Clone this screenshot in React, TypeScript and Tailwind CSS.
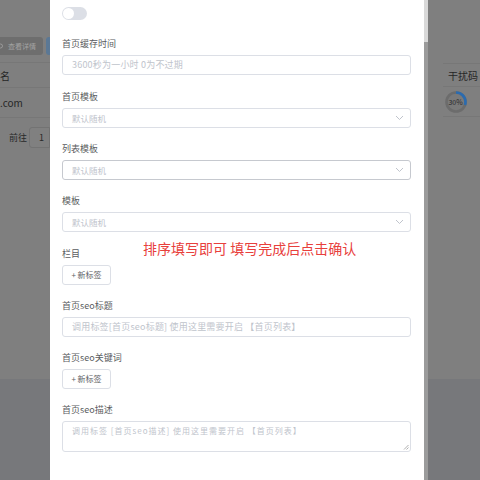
import React from "react";

const font = { fontFamily: '"Noto Sans CJK SC", "Noto Sans", sans-serif' };

function Label({ children }: { children: React.ReactNode }) {
  return <div className="h-[14px] text-[9px] leading-[14px] text-[#5a5c60]">{children}</div>;
}

function Input({ placeholder }: { placeholder: string }) {
  return (
    <div className="mt-[4px] flex h-[20px] items-center rounded-[3px] border border-[#dcdfe6] bg-white px-[9px] text-[9px] tracking-[0.2px] text-[#c0c4cc]">
      {placeholder}
    </div>
  );
}

function Select({ dark }: { dark?: boolean }) {
  return (
    <div
      className={
        "mt-[4px] flex h-[20px] items-center justify-between rounded-[3px] border bg-white pl-[9px] pr-[6px] text-[8.5px] text-[#c0c4cc] " +
        (dark ? "border-[#c6c9cf]" : "border-[#dcdfe6]")
      }
    >
      <span>默认随机</span>
      <svg width="9" height="6" viewBox="0 0 9 6" fill="none">
        <path d="M1 1l3.5 3.5L8 1" stroke="#c0c4cc" strokeWidth="1" />
      </svg>
    </div>
  );
}

function TagButton() {
  return (
    <div className="mt-[4px] flex h-[20px] w-[49px] items-center justify-center rounded-[3px] border border-[#dcdfe6] bg-white text-[8px] text-[#606266]">
      + 新标签
    </div>
  );
}

function Item({ label, children, mb }: { label: string; children: React.ReactNode; mb: string }) {
  return (
    <div className={mb}>
      <Label>{label}</Label>
      {children}
    </div>
  );
}

export default function App() {
  return (
    <div className="relative flex h-[480px] w-[480px] overflow-hidden" style={font}>
      {/* left page behind overlay */}
      <div className="flex w-[50px] shrink-0 flex-col">
        <div className="flex h-[379px] flex-col bg-[#7f7f7f]">
          <div className="h-[37px]" />
          <div className="flex h-[18px]">
            <div className="flex w-[43px] items-center gap-[2px] overflow-hidden rounded-r-[3px] bg-[#6e6e6e] text-[7px] text-[#a3a3a3]">
              <svg className="-ml-[1px] shrink-0" width="6" height="6" viewBox="0 0 6 6">
                <circle cx="1.5" cy="3" r="2" fill="none" stroke="#a3a3a3" strokeWidth="0.8" />
              </svg>
              <span className="ml-[1px]">查看详情</span>
            </div>
            <div className="ml-[3px] flex-1 rounded-l-[3px] bg-[#5b7895]" />
          </div>
          <div className="h-[7px]" />
          <div className="flex h-[25px] items-center border-t border-[#777] text-[10px] text-[#262626]">名</div>
          <div className="flex h-[30px] items-center border-t border-[#777] text-[10px] text-[#262626]">.com</div>
          <div className="border-t border-[#777]" />
          <div className="mt-[9px] flex h-[21px] items-center justify-end">
            <span className="mr-[2px] text-[9px] text-[#2a2a2a]">前往</span>
            <div className="flex h-[21px] w-[21px] items-center justify-end rounded-l-[3px] border border-[#737373] bg-[#808080] pr-[5px] text-[9px] text-[#2a2a2a]">
              1
            </div>
          </div>
        </div>
        <div className="flex-1 bg-[#77787b]" />
      </div>

      {/* modal */}
      <div className="relative w-[374px] shrink-0 bg-white pl-[12px] pr-[13px]">
        <div className="pt-[7px]">
          <div className="relative h-[13px] w-[25px] rounded-full bg-[#dcdfe6]">
            <div className="absolute left-[1px] top-[1px] h-[11px] w-[11px] rounded-full bg-white" />
          </div>
        </div>
        <div className="mt-[17px]">
          <Item label="首页缓存时间" mb="mb-[15px]">
            <Input placeholder="3600秒为一小时 0为不过期" />
          </Item>
          <Item label="首页模板" mb="mb-[14px]">
            <Select />
          </Item>
          <Item label="列表模板" mb="mb-[14px]">
            <Select dark />
          </Item>
          <Item label="模板" mb="mb-[15px]">
            <Select />
          </Item>
          <Item label="栏目" mb="mb-[14px]">
            <TagButton />
          </Item>
          <Item label="首页seo标题" mb="mb-[14px]">
            <Input placeholder="调用标签[首页seo标题]  使用这里需要开启 【首页列表】" />
          </Item>
          <Item label="首页seo关键词" mb="mb-[14px]">
            <TagButton />
          </Item>
          <Item label="首页seo描述" mb="mb-[14px]">
            <div className="relative mt-[4px] h-[31px] rounded-[3px] border border-[#dcdfe6] bg-white px-[9px] pt-[3px] text-[8px] leading-[12px] tracking-[1px] text-[#c0c4cc]">
              调用标签 [首页seo描述]  使用这里需要开启 【首页列表】
              <svg className="absolute bottom-[1px] right-[1px]" width="6" height="6" viewBox="0 0 6 6">
                <path d="M5.5 1L1 5.5M5.5 3.5L3.5 5.5" stroke="#9a9a9a" strokeWidth="0.8" />
              </svg>
            </div>
          </Item>
        </div>
        <div className="absolute left-[93px] top-[239px] text-[14px] leading-[18px] text-[#e8403c]">
          排序填写即可 填写完成后点击确认
        </div>
      </div>

      {/* scrollbar */}
      <div className="flex w-[4px] shrink-0 flex-col bg-[#9b9b9b]">
        <div className="h-[42px] bg-[#d9d9d9]" />
      </div>

      {/* right page behind overlay */}
      <div className="flex flex-1 flex-col">
        <div className="flex h-[379px] flex-col bg-[#7f7f7f]">
          <div className="h-[63px]" />
          <div className="ml-[15px] flex h-[23px] items-center border-t border-[#777] pl-[5px] text-[10px] text-[#262626]">
            干扰码
          </div>
          <div className="ml-[15px] flex h-[31px] items-center border-t border-b border-[#777] pl-[1px]">
            <svg width="24" height="24" viewBox="0 0 24 24">
              <circle cx="12" cy="12" r="9.5" fill="#7a7a7a" stroke="#6c6c6c" strokeWidth="2.6" />
              <circle
                cx="12"
                cy="12"
                r="9.5"
                fill="none"
                stroke="#2a6bb0"
                strokeWidth="2.6"
                strokeDasharray="17.9 59.7"
                transform="rotate(-90 12 12)"
              />
              <text x="11.5" y="14.5" textAnchor="middle" fontSize="7" fill="#2a2a2a">
                30%
              </text>
            </svg>
          </div>
        </div>
        <div className="flex-1 bg-[#77787b]" />
      </div>
    </div>
  );
}
